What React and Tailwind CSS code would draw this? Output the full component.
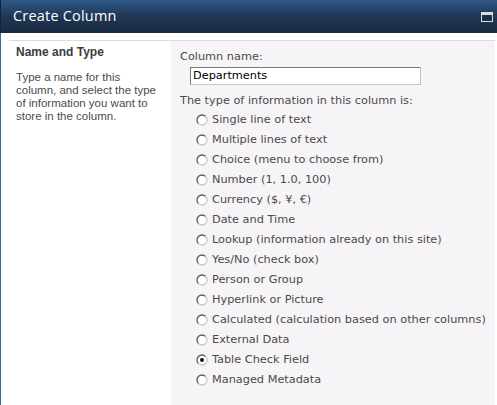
import React from "react";

const options = [
  "Single line of text",
  "Multiple lines of text",
  "Choice (menu to choose from)",
  "Number (1, 1.0, 100)",
  "Currency ($, ¥, €)",
  "Date and Time",
  "Lookup (information already on this site)",
  "Yes/No (check box)",
  "Person or Group",
  "Hyperlink or Picture",
  "Calculated (calculation based on other columns)",
  "External Data",
  "Table Check Field",
  "Managed Metadata",
];

function Radio({ checked }) {
  return (
    <svg width="12" height="12" viewBox="0 0 12 12" className="shrink-0">
      <circle cx="6" cy="6" r="5" fill="#ffffff" />
      <path d="M2.46 9.54 A5 5 0 0 1 9.54 2.46" fill="none" stroke="#5a5a5a" strokeWidth="1.3" />
      <path d="M9.54 2.46 A5 5 0 0 1 2.46 9.54" fill="none" stroke="#c8c8c8" strokeWidth="1.3" />
      {checked && <circle cx="6" cy="6" r="2" fill="#111111" />}
    </svg>
  );
}

export default function App() {
  return (
    <div className="w-[497px] h-[405px] bg-white overflow-hidden flex flex-col">
      <div className="h-[33px] shrink-0 flex items-center justify-between pl-[12px] pr-[4px] bg-gradient-to-b from-[#2f5a8a] via-[#1f3654] to-[#1a2b42] border-l border-[#15243a]">
        <span className="text-white text-[14.5px] font-['Open_Sans','DejaVu_Sans',sans-serif] tracking-[0.2px] leading-none">
          Create Column
        </span>
        <svg width="12" height="10" viewBox="0 0 12 10">
          <rect x="0.5" y="0.5" width="11" height="9" fill="#1c2d44" stroke="#d8dde4" strokeWidth="1" />
          <rect x="1" y="1" width="10" height="2" fill="#d8dde4" />
        </svg>
      </div>
      <div className="flex-1 flex flex-col border-l border-[#2a6ea5] pl-[8px] pr-[2px] pt-[7px]">
        <div className="flex-1 flex border-t border-[#dcdcdc]">
          <div className="w-[162px] shrink-0 px-[7px] pt-[5px] font-['Liberation_Sans',sans-serif] text-[11.5px]">
            <div className="font-bold text-[#3c3c3c] text-[12px] leading-[13px]">Name and Type</div>
            <div className="mt-[12px] text-[#4c4c4c] leading-[13px] flex flex-col">
              <span>Type a name for this</span>
              <span>column, and select the type</span>
              <span>of information you want to</span>
              <span>store in the column.</span>
            </div>
          </div>
          <div className="flex-1 bg-[#f7f4f7] pl-[9px] pt-[9px] font-['DejaVu_Sans',sans-serif] text-[11.3px] text-[#4a4a4a]">
            <div className="leading-[13px]">Column name:</div>
            <div className="mt-[4px] ml-[10px] w-[231px] h-[18px] bg-white border border-t-[#7a7a7a] border-l-[#7a7a7a] border-r-[#c4c4c4] border-b-[#c4c4c4] flex items-center pl-[2px] text-black leading-none">
              Departments
            </div>
            <div className="mt-[9px] leading-[13px]">The type of information in this column is:</div>
            <div className="mt-[3px] flex flex-col">
              {options.map((o) => (
                <div key={o} className="h-[20px] flex items-center pl-[16px] gap-[4px]">
                  <Radio checked={o === "Table Check Field"} />
                  <span className="leading-none">{o}</span>
                </div>
              ))}
            </div>
          </div>
        </div>
      </div>
    </div>
  );
}
